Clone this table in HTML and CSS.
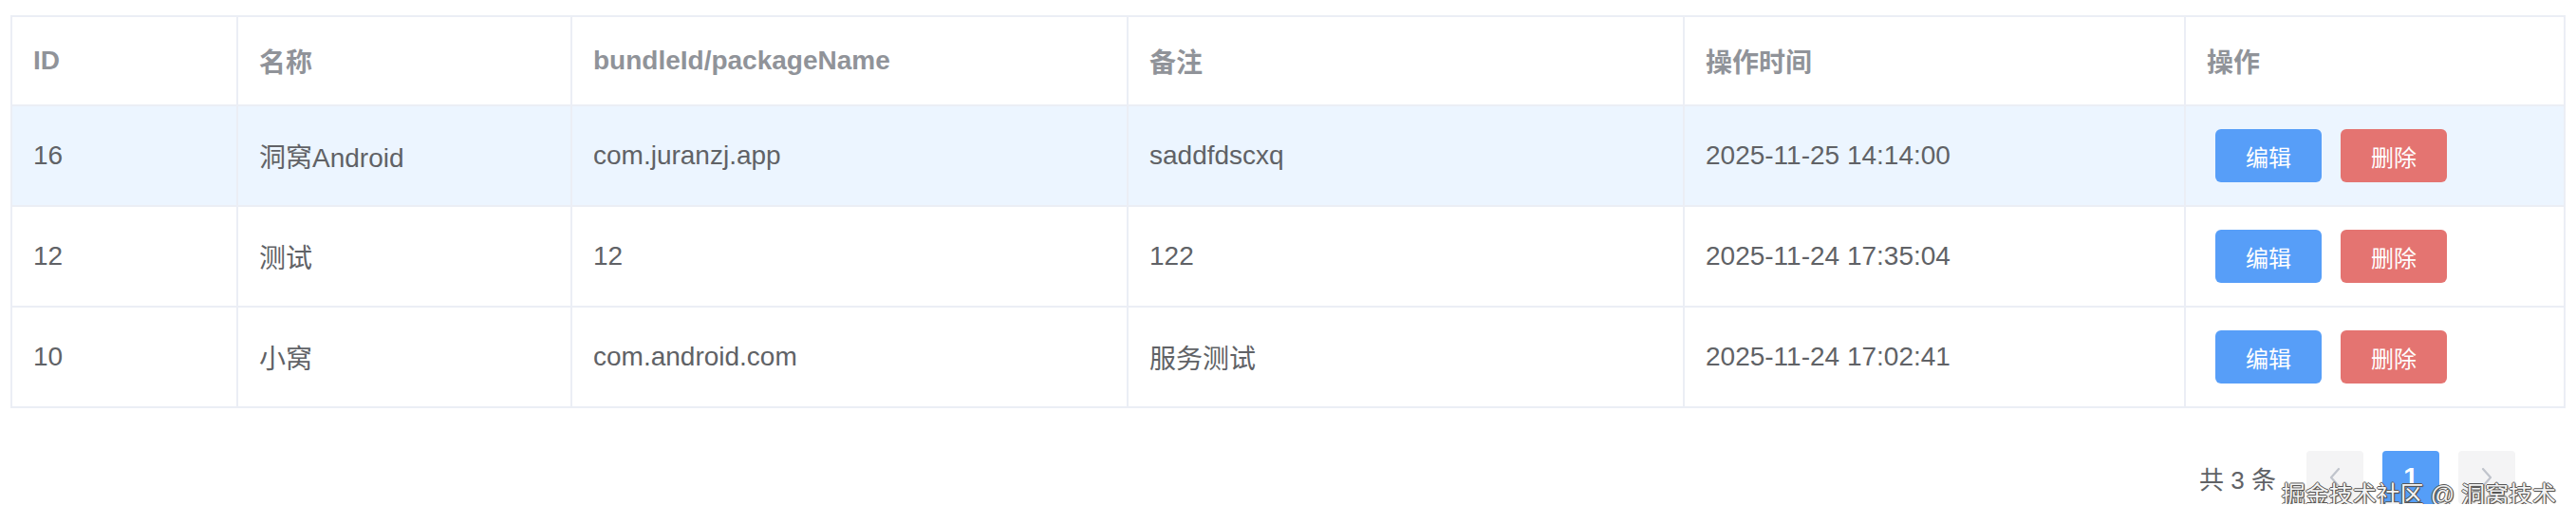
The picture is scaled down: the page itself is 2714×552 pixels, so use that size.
FILE: index.html
```html
<!DOCTYPE html>
<html lang="zh-CN">
<head>
<meta charset="utf-8">
<title>应用列表</title>
<link rel="stylesheet" href="styles.css">
</head>
<body>
<div class="page">
  <table class="grid">
    <colgroup>
      <col class="c-id">
      <col class="c-name">
      <col class="c-bundle">
      <col class="c-note">
      <col class="c-time">
      <col class="c-op">
    </colgroup>
    <thead>
      <tr>
        <th>ID</th>
        <th>名称</th>
        <th>bundleId/packageName</th>
        <th>备注</th>
        <th>操作时间</th>
        <th>操作</th>
      </tr>
    </thead>
    <tbody>
      <tr class="hover">
        <td>16</td>
        <td>洞窝Android</td>
        <td>com.juranzj.app</td>
        <td>saddfdscxq</td>
        <td>2025-11-25 14:14:00</td>
        <td><div class="actions"><button class="btn btn-edit">编辑</button><button class="btn btn-del">删除</button></div></td>
      </tr>
      <tr>
        <td>12</td>
        <td>测试</td>
        <td>12</td>
        <td>122</td>
        <td>2025-11-24 17:35:04</td>
        <td><div class="actions"><button class="btn btn-edit">编辑</button><button class="btn btn-del">删除</button></div></td>
      </tr>
      <tr>
        <td>10</td>
        <td>小窝</td>
        <td>com.android.com</td>
        <td>服务测试</td>
        <td>2025-11-24 17:02:41</td>
        <td><div class="actions"><button class="btn btn-edit">编辑</button><button class="btn btn-del">删除</button></div></td>
      </tr>
    </tbody>
  </table>

  <div class="pager">
    <span class="total">共 3 条</span>
    <button class="pg pg-nav" aria-label="上一页">
      <svg width="14" height="22" viewBox="0 0 14 22"><path d="M11 2 L3 11 L11 20" fill="none" stroke="#c0c4cc" stroke-width="2.2" stroke-linecap="round" stroke-linejoin="round"/></svg>
    </button>
    <button class="pg pg-active">1</button>
    <button class="pg pg-nav" aria-label="下一页">
      <svg width="14" height="22" viewBox="0 0 14 22"><path d="M3 2 L11 11 L3 20" fill="none" stroke="#c0c4cc" stroke-width="2.2" stroke-linecap="round" stroke-linejoin="round"/></svg>
    </button>
    <span class="watermark">掘金技术社区 @ 洞窝技术</span>
  </div>
</div>
</body>
</html>
```

FILE: styles.css
```css
html, body {
  margin: 0;
  padding: 0;
  background: #ffffff;
}

.page {
  padding: 16px 13px 0 11px;
  font-family: "Liberation Sans", "Noto Sans CJK SC", sans-serif;
}

.grid {
  width: 2690px;
  table-layout: fixed;
  border-collapse: collapse;
  border: 2px solid #ebeef5;
  font-size: 28px;
}

.c-id { width: 238px; }
.c-name { width: 352px; }
.c-bundle { width: 586px; }
.c-note { width: 586px; }
.c-time { width: 528px; }
.c-op { width: 400px; }

.grid th,
.grid td {
  border: 2px solid #ebeef5;
  padding: 0 22px;
  text-align: left;
  vertical-align: middle;
  white-space: nowrap;
}

.grid th {
  height: 92px;
  color: #909399;
  font-weight: bold;
}

.grid td {
  height: 104px;
  color: #606266;
}

.grid tr.hover td {
  background: #ecf5ff;
}

.actions {
  display: flex;
  gap: 20px;
  padding-left: 9px;
}

.btn {
  width: 112px;
  height: 56px;
  border: none;
  border-radius: 6px;
  color: #ffffff;
  font-family: "Liberation Sans", "Noto Sans CJK SC", sans-serif;
  font-size: 24px;
  padding: 0;
}

.btn-edit { background: #579ef8; }
.btn-del { background: #e47471; }

.pager {
  position: relative;
  display: flex;
  justify-content: flex-end;
  align-items: center;
  margin-top: 45px;
  padding-right: 51px;
}

.total {
  font-size: 26px;
  color: #606266;
  margin-right: 32px;
}

.pg {
  width: 60px;
  height: 56px;
  border: none;
  border-radius: 4px;
  padding: 0;
  margin-left: 20px;
  display: flex;
  align-items: center;
  justify-content: center;
  font-family: "Liberation Sans", sans-serif;
}

.total + .pg { margin-left: 0; }

.pg-nav { background: #f4f4f5; }

.pg-active {
  background: #559ef8;
  color: #ffffff;
  font-size: 28px;
  font-weight: bold;
}

.watermark {
  position: absolute;
  right: 8px;
  top: 28px;
  font-size: 25px;
  line-height: 36px;
  color: #f4f4f4;
  text-shadow: 1px 0 0 #555, -1px 0 0 #555, 0 1px 0 #555, 0 -1px 0 #555, 1px 1px 1px #444;
  white-space: nowrap;
  pointer-events: none;
}
```
